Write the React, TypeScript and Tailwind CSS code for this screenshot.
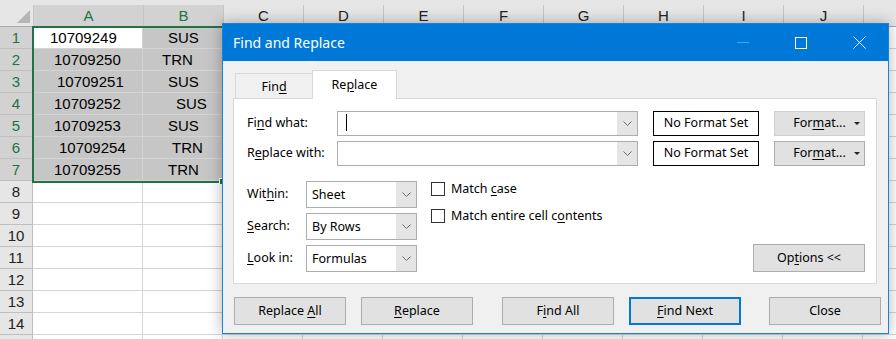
import React from "react";

const colWidths = [110, 80, 80, 80, 80, 80, 80, 80, 80, 80, 80];
const colLetters = ["A", "B", "C", "D", "E", "F", "G", "H", "I", "J", ""];

// value, left pad in A, code, left pad in B
const cells: [string, number, string, number][] = [
  ["10709249", 17, "SUS", 25],
  ["10709250", 21, "TRN", 19],
  ["10709251", 24, "SUS", 25],
  ["10709252", 21, "SUS", 33],
  ["10709253", 21, "SUS", 25],
  ["10709254", 26, "TRN", 29],
  ["10709255", 21, "TRN", 25],
];

function U({ children }: { children: React.ReactNode }) {
  return <span className="underline underline-offset-2">{children}</span>;
}

function Chevron() {
  return (
    <svg width="9" height="6" viewBox="0 0 9 6" fill="none">
      <path d="M0.5 0.5 L4.5 4.5 L8.5 0.5" stroke="#6b6b6b" strokeWidth="1" />
    </svg>
  );
}

function Combo({ width, height, text }: { width: number; height: number; text?: string }) {
  return (
    <div className="flex shrink-0 border border-[#adadad] bg-white" style={{ width, height }}>
      <div className="flex-1 pl-[5px] leading-[25px]">{text}</div>
      <div className="flex w-[20px] items-center justify-center bg-[#e5e5e5]">
        <Chevron />
      </div>
    </div>
  );
}

function Sheet() {
  return (
    <div className="flex flex-col font-['Liberation_Sans',Arial,sans-serif] text-[15px] text-black">
      <div className="flex h-[27px] shrink-0 border-b border-[#ababab] bg-[#e6e6e6]">
        <div className="relative w-[33px] shrink-0">
          <svg className="absolute left-[17px] top-[10px]" width="13" height="13" viewBox="0 0 13 13">
            <path d="M13 0 L13 13 L0 13 Z" fill="#b5b5b5" />
          </svg>
        </div>
        {colLetters.map((l, i) => (
          <div
            key={i}
            className={`mt-[5px] shrink-0 border-l border-[#c6c6c6] text-center leading-[21px] ${
              i < 2 ? "bg-[#d2d2d2] text-[#217346]" : "text-[#222]"
            }`}
            style={{ width: colWidths[i] }}
          >
            {l}
          </div>
        ))}
      </div>
      {Array.from({ length: 15 }, (_, r) => {
        const row = r + 1;
        const sel = row <= 7;
        return (
          <div key={row} className="flex h-[22px] shrink-0">
            <div
              className={`w-[33px] shrink-0 border-b border-r border-[#bfbfbf] text-center leading-[21px] ${
                sel ? "bg-[#d2d2d2] text-[#217346]" : "bg-[#e6e6e6] text-[#222]"
              }`}
            >
              {row <= 14 ? row : null}
            </div>
            {colWidths.map((w, c) => {
              let bg = "bg-white";
              let content: React.ReactNode = null;
              if (sel && c < 2) {
                const d = cells[r];
                bg = row === 1 && c === 0 ? "bg-white" : "bg-[#c6c6c6]";
                content = (
                  <span style={{ paddingLeft: c === 0 ? d[1] : d[3] }}>{c === 0 ? d[0] : d[2]}</span>
                );
              }
              return (
                <div
                  key={c}
                  className={`shrink-0 border-b border-r border-[#d4d4d4] leading-[22px] ${bg}`}
                  style={{ width: w }}
                >
                  {content}
                </div>
              );
            })}
          </div>
        );
      })}
    </div>
  );
}

function Btn({
  children,
  width = 112,
  height = 28,
  primary = false,
  light = false,
}: {
  children: React.ReactNode;
  width?: number;
  height?: number;
  primary?: boolean;
  light?: boolean;
}) {
  return (
    <div
      className={`relative flex shrink-0 items-center justify-center bg-[#e1e1e1] ${
        primary ? "border-2 border-[#0078d7]" : light ? "border border-[#cfcfcf]" : "border border-[#adadad]"
      }`}
      style={{ width, height }}
    >
      <span>{children}</span>
    </div>
  );
}

function FormatBtn({ light }: { light?: boolean }) {
  return (
    <div className="relative">
      <Btn width={91} height={25} light={light}>
        For<U>m</U>at...
      </Btn>
      <span className="absolute right-[5px] top-[11px] h-0 w-0 border-x-[3px] border-t-[3px] border-x-transparent border-t-[#222]" />
    </div>
  );
}

function Dialog() {
  return (
    <div className="absolute left-[222px] top-[23px] flex h-[311px] w-[667px] flex-col border border-[#1883d7] bg-[#f0f0f0] font-['Noto_Sans',sans-serif] text-[12.5px] text-black shadow-[0_0_14px_rgba(0,0,0,0.3)]">
      {/* title bar */}
      <div className="flex h-[37px] shrink-0 items-center bg-[#0078d7] pl-[10px] text-white">
        <span className="text-[14px]">Find and Replace</span>
        <div className="ml-auto flex h-full">
          <div className="flex w-[58px] items-center justify-center">
            <div className="h-px w-[12px] bg-[#4aa0e6]" />
          </div>
          <div className="flex w-[58px] items-center justify-center">
            <div className="h-[12px] w-[12px] border border-white" />
          </div>
          <div className="flex w-[58px] items-center justify-center">
            <svg width="13" height="13" viewBox="0 0 13 13">
              <path d="M0.5 0.5 L12.5 12.5 M12.5 0.5 L0.5 12.5" stroke="white" strokeWidth="1" />
            </svg>
          </div>
        </div>
      </div>

      {/* tabs */}
      <div className="mt-[9px] flex items-end pl-[10px]">
        <div className="ml-[2px] flex h-[25px] w-[77px] items-center justify-center border-l border-t border-[#d9d9d9] pt-[2px]">
          <span>
            Fin<U>d</U>
          </span>
        </div>
        <div className="relative z-10 -mb-px flex h-[29px] w-[85px] items-center justify-center border border-b-0 border-[#d9d9d9] bg-white">
          <span>
            Re<U>p</U>lace
          </span>
        </div>
      </div>

      {/* panel */}
      <div className="ml-[10px] mr-[11px] flex h-[186px] flex-col border border-[#d9d9d9] bg-white pb-[11px] pl-[13px] pr-[11px] pt-[12px]">
        <div className="flex h-[25px] items-center">
          <div className="w-[90px] shrink-0">
            Fi<U>n</U>d what:
          </div>
          <div className="relative">
            <Combo width={301} height={25} />
            <div className="absolute left-[9px] top-[3px] h-[17px] w-px bg-black" />
          </div>
          <div className="ml-[15px] flex h-[25px] w-[106px] items-center justify-center border border-black">
            No Format Set
          </div>
          <div className="ml-[15px]">
            <FormatBtn light />
          </div>
        </div>
        <div className="mt-[5px] flex h-[25px] items-center">
          <div className="w-[90px] shrink-0">
            R<U>e</U>place with:
          </div>
          <Combo width={301} height={25} />
          <div className="ml-[15px] flex h-[25px] w-[106px] items-center justify-center border border-black">
            No Format Set
          </div>
          <div className="ml-[15px]">
            <FormatBtn />
          </div>
        </div>

        <div className="mt-[14px] flex flex-1 items-end">
          <div className="flex flex-col gap-[5px]">
            {[
              [<>Wit<U>h</U>in:</>, "Sheet"],
              [<><U>S</U>earch:</>, "By Rows"],
              [<><U>L</U>ook in:</>, "Formulas"],
            ].map(([label, val], i) => (
              <div key={i} className="flex h-[27px] items-center">
                <div className="w-[59px] shrink-0">{label}</div>
                <Combo width={111} height={27} text={val as string} />
              </div>
            ))}
          </div>
          <div className="ml-[14px] flex flex-col gap-[8px] self-start">
            <div className="flex items-center gap-[6px]">
              <div className="h-[14px] w-[14px] border border-[#333] bg-white" />
              <span>
                Match <U>c</U>ase
              </span>
            </div>
            <div className="flex items-center gap-[6px]">
              <div className="h-[14px] w-[14px] border border-[#333] bg-white" />
              <span>
                Match entire cell c<U>o</U>ntents
              </span>
            </div>
          </div>
          <div className="ml-auto">
            <Btn width={112} height={28}>
              Op<U>t</U>ions &lt;&lt;
            </Btn>
          </div>
        </div>
      </div>

      {/* bottom buttons */}
      <div className="mt-[13px] flex pl-[11px]">
        <Btn>
          Replace <U>A</U>ll
        </Btn>
        <div className="ml-[15px]">
          <Btn>
            <U>R</U>eplace
          </Btn>
        </div>
        <div className="ml-[29px]">
          <Btn>
            F<U>i</U>nd All
          </Btn>
        </div>
        <div className="ml-[15px]">
          <Btn primary>
            <U>F</U>ind Next
          </Btn>
        </div>
        <div className="ml-[28px]">
          <Btn>Close</Btn>
        </div>
      </div>
    </div>
  );
}

export default function App() {
  return (
    <div className="relative h-[339px] w-[896px] overflow-hidden bg-white">
      <Sheet />
      {/* selection outline */}
      <div className="absolute left-[32px] top-[26px] h-[157px] w-[192px] border-2 border-[#217346]" />
      <div className="absolute left-[219px] top-[178px] h-[7px] w-[7px] border border-white bg-[#217346]" />
      <Dialog />
    </div>
  );
}
